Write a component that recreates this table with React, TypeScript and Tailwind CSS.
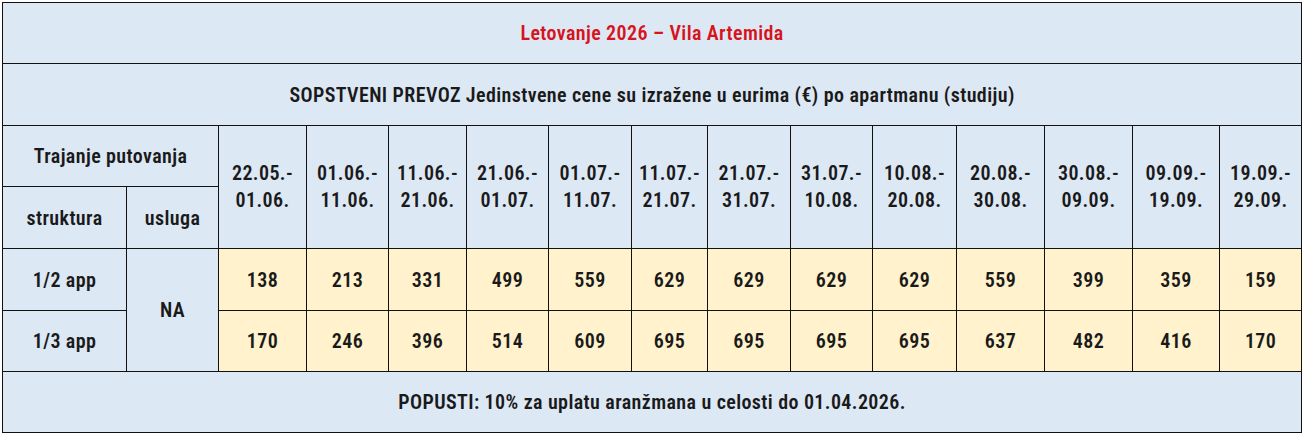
import React from "react";

const dates = [
  ["22.05.-", "01.06."],
  ["01.06.-", "11.06."],
  ["11.06.-", "21.06."],
  ["21.06.-", "01.07."],
  ["01.07.-", "11.07."],
  ["11.07.-", "21.07."],
  ["21.07.-", "31.07."],
  ["31.07.-", "10.08."],
  ["10.08.-", "20.08."],
  ["20.08.-", "30.08."],
  ["30.08.-", "09.09."],
  ["09.09.-", "19.09."],
  ["19.09.-", "29.09."],
];

const prices: { name: string; values: number[] }[] = [
  { name: "1/2 app", values: [138, 213, 331, 499, 559, 629, 629, 629, 629, 559, 399, 359, 159] },
  { name: "1/3 app", values: [170, 246, 396, 514, 609, 695, 695, 695, 695, 637, 482, 416, 170] },
];

const colWidths = [
  "w-[124px]", "w-[92px]", "w-[88px]", "w-[82px]", "w-[78px]", "w-[82px]", "w-[83px]",
  "w-[76px]", "w-[83px]", "w-[82px]", "w-[84px]", "w-[88px]", "w-[88px]", "w-[87px]", "w-[82px]",
];

const cell = "border-[1.5px] border-[#111] text-center align-middle px-1";

export default function App() {
  return (
    <div className="bg-white pl-[2px] pt-[2px] font-['Roboto_Condensed','Roboto','DejaVu_Sans_Condensed',sans-serif] text-[20px] font-semibold tracking-[0.4px] text-[#1a1a1a]">
      <table className="table-fixed border-collapse w-[1300px] bg-[#dde8f5] border-[1.5px] border-[#111]">
        <colgroup>
          {colWidths.map((w, i) => (
            <col key={i} className={w} />
          ))}
        </colgroup>
        <tbody>
          <tr className="h-[61px]">
            <td colSpan={15} className={`${cell} text-[#d7141c]`}>
              Letovanje 2026 – Vila Artemida
            </td>
          </tr>
          <tr className="h-[62px]">
            <td colSpan={15} className={cell}>
              SOPSTVENI PREVOZ Jedinstvene cene su izražene u eurima (€) po apartmanu (studiju)
            </td>
          </tr>
          <tr className="h-[61px]">
            <td colSpan={2} className={cell}>
              Trajanje putovanja
            </td>
            {dates.map(([a, b], i) => (
              <td key={i} rowSpan={2} className={`${cell} leading-[27px]`}>
                {a}
                <br />
                {b}
              </td>
            ))}
          </tr>
          <tr className="h-[62px]">
            <td className={cell}>struktura</td>
            <td className={cell}>usluga</td>
          </tr>
          {prices.map((row, r) => (
            <tr key={row.name} className={r === 0 ? "h-[62px]" : "h-[61px]"}>
              <td className={cell}>{row.name}</td>
              {r === 0 && (
                <td rowSpan={2} className={cell}>
                  NA
                </td>
              )}
              {row.values.map((v, i) => (
                <td key={i} className={`${cell} bg-[#fff2cc]`}>
                  {v}
                </td>
              ))}
            </tr>
          ))}
          <tr className="h-[61px]">
            <td colSpan={15} className={cell}>
              POPUSTI: 10% za uplatu aranžmana u celosti do 01.04.2026.
            </td>
          </tr>
        </tbody>
      </table>
    </div>
  );
}
